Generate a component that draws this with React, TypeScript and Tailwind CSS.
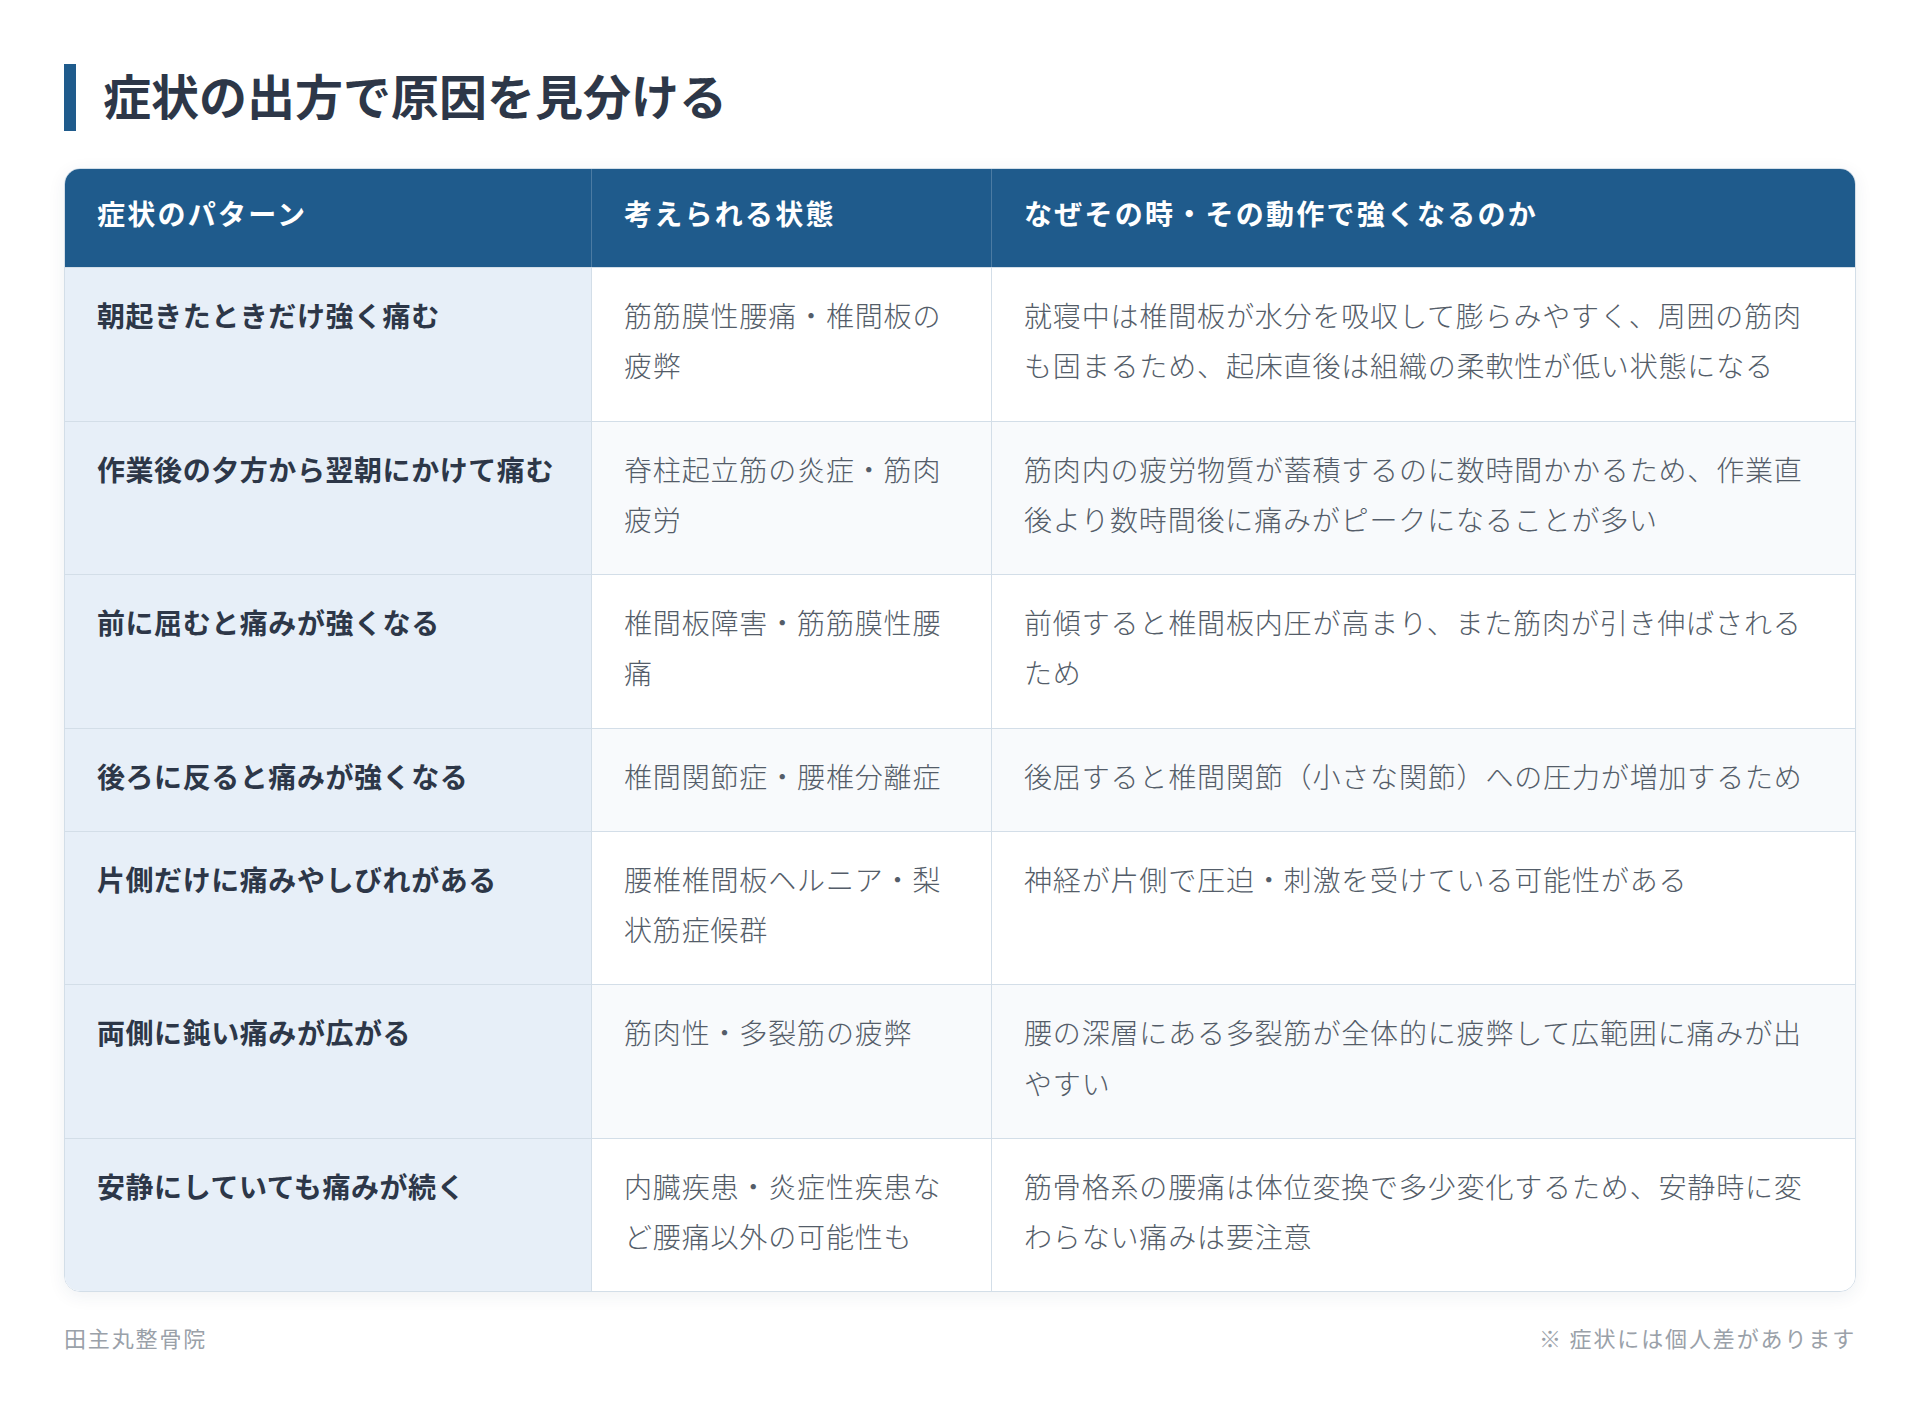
import React from "react";

const rows: [string, string, string][] = [
  ["朝起きたときだけ強く痛む", "筋筋膜性腰痛・椎間板の疲弊", "就寝中は椎間板が水分を吸収して膨らみやすく、周囲の筋肉も固まるため、起床直後は組織の柔軟性が低い状態になる"],
  ["作業後の夕方から翌朝にかけて痛む", "脊柱起立筋の炎症・筋肉疲労", "筋肉内の疲労物質が蓄積するのに数時間かかるため、作業直後より数時間後に痛みがピークになることが多い"],
  ["前に屈むと痛みが強くなる", "椎間板障害・筋筋膜性腰痛", "前傾すると椎間板内圧が高まり、また筋肉が引き伸ばされるため"],
  ["後ろに反ると痛みが強くなる", "椎間関節症・腰椎分離症", "後屈すると椎間関節（小さな関節）への圧力が増加するため"],
  ["片側だけに痛みやしびれがある", "腰椎椎間板ヘルニア・梨状筋症候群", "神経が片側で圧迫・刺激を受けている可能性がある"],
  ["両側に鈍い痛みが広がる", "筋肉性・多裂筋の疲弊", "腰の深層にある多裂筋が全体的に疲弊して広範囲に痛みが出やすい"],
  ["安静にしていても痛みが続く", "内臓疾患・炎症性疾患など腰痛以外の可能性も", "筋骨格系の腰痛は体位変換で多少変化するため、安静時に変わらない痛みは要注意"],
];

export default function App() {
  return (
    <div
      className="min-h-[1424px] w-[1920px] bg-white px-16 pt-16"
      style={{ fontFamily: '"Noto Sans CJK JP", "Noto Sans", sans-serif' }}
    >
      <h1 className="border-l-[12px] border-[#1f5b8c] pb-[7px] pl-[27px] text-[48px] font-bold leading-[60px] text-[#2d3748]">
        症状の出方で原因を見分ける
      </h1>

      <div className="mt-[37px] overflow-hidden rounded-2xl border border-[#d3dee8] shadow-[0_4px_18px_rgba(30,60,90,0.07)]">
        <div className="grid grid-cols-[527px_400px_1fr] bg-[#1f5b8c] text-[28px] font-bold leading-[42px] tracking-[0.08em] text-white">
          <div className="border-r border-white/20 px-8 pb-[33px] pt-[23px]">症状のパターン</div>
          <div className="border-r border-white/20 px-8 pb-[33px] pt-[23px]">考えられる状態</div>
          <div className="px-8 pb-[33px] pt-[23px]">なぜその時・その動作で強くなるのか</div>
        </div>
        {rows.map((r, i) => (
          <div
            key={i}
            className={`grid grid-cols-[527px_400px_1fr] border-t border-[#d3dee8] text-[28px] leading-[50.25px] ${
              i % 2 === 1 ? "bg-[#f8fafc]" : "bg-white"
            }`}
          >
            <div className="border-r border-[#d3dee8] bg-[#e7eff8] pb-[30px] pl-8 pr-5 pt-[22px] font-bold tracking-[0.02em] text-[#2d3748]">
              {r[0]}
            </div>
            <div className="border-r border-[#d3dee8] px-8 pb-[30px] pt-[22px] font-light tracking-[0.03em] text-[#545d69]">
              {r[1]}
            </div>
            <div className="px-8 pb-[30px] pt-[22px] font-light tracking-[0.03em] text-[#545d69]">{r[2]}</div>
          </div>
        ))}
      </div>

      <div className="mt-[29px] flex justify-between text-[22px] leading-[1.5] tracking-[0.085em] text-[#9aa1a9]">
        <span>田主丸整骨院</span>
        <span>※ 症状には個人差があります</span>
      </div>
    </div>
  );
}
